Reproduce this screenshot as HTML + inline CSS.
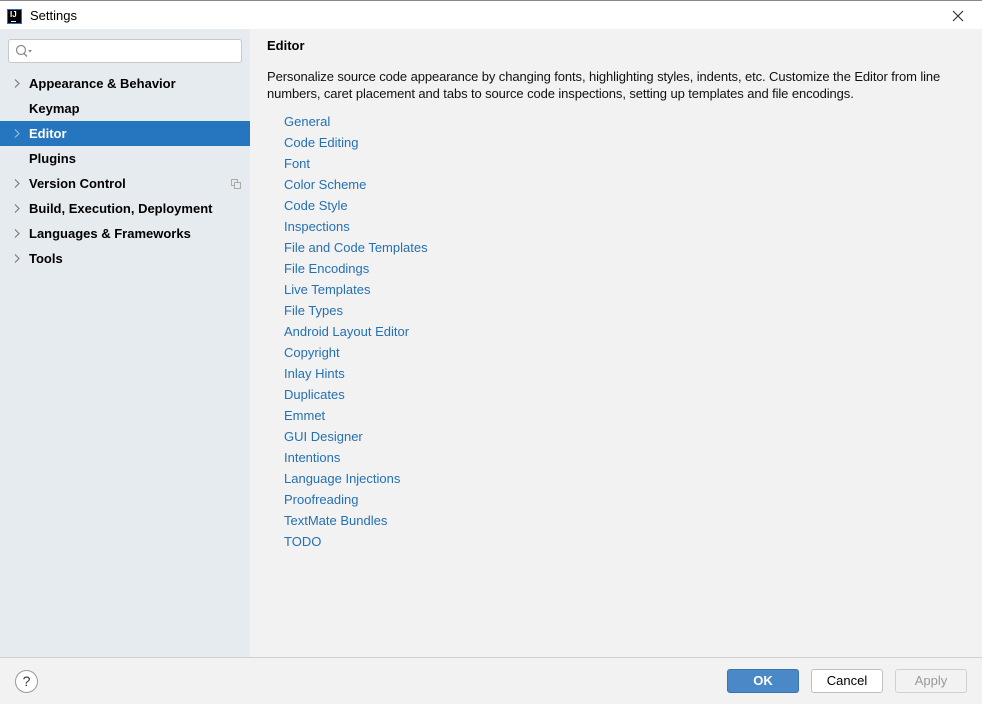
<!DOCTYPE html>
<html><head><meta charset="utf-8"><style>
*{margin:0;padding:0;box-sizing:border-box}
body{width:982px;height:704px;overflow:hidden;background:#f2f2f2;font-family:"Liberation Sans",Arial,sans-serif;font-size:13px;color:#000;position:relative}
.top{position:absolute;left:0;top:0;width:982px;height:1px;background:#8a8a8a}
.title{position:absolute;left:0;top:1px;width:982px;height:28px;background:#fff}
.title .t{position:absolute;left:30px;top:7px;font-size:13px}
.logo{position:absolute;left:7px;top:8px;width:15px;height:15px;background:#000;border:1px solid #2a6ad0;color:#fff;font-size:8px;font-weight:bold;line-height:9px;padding-left:2px}
.logo i{position:absolute;left:3px;top:11px;width:5px;height:1px;background:#fff}
.close{position:absolute;left:952px;top:9px}
.side{position:absolute;left:0;top:29px;width:250px;height:628px;background:#e6ebf0}
.search{position:absolute;left:8px;top:10px;width:234px;height:24px;background:#fff;border:1px solid #c4c9ce;border-radius:3px}
.item{position:absolute;left:0;width:250px;height:25px;line-height:25px;font-weight:bold;padding-left:29px;font-size:13px}
.item svg.ar{position:absolute;left:14px;top:8px}
.sel{background:#2675bf;color:#fff}
h1{position:absolute;left:267px;top:38px;font-size:13px;font-weight:bold}
.desc{position:absolute;left:267px;top:68px;width:700px;line-height:17px;font-size:13px;color:#111;letter-spacing:-0.1px}
.links{position:absolute;left:284px;top:113px}
.links div{height:21px;line-height:17px;color:#2470b3;font-size:13px}
.foot{position:absolute;left:0;top:657px;width:982px;height:1px;background:#d0d0d0}
.help{position:absolute;left:15px;top:670px;width:23px;height:23px;border:1px solid #999;border-radius:50%;background:#fff;text-align:center;line-height:21px;font-size:14px;color:#333}
.btn{position:absolute;top:669px;height:24px;width:72px;border:1px solid #bfbfbf;border-radius:3px;background:#fff;text-align:center;line-height:22px;font-size:13px}
</style></head><body>
<div class="top"></div>
<div class="title"><div class="logo">IJ<i></i></div><div class="t">Settings</div><svg class="close" width="12" height="12"><path d="M1 1L11 11M11 1L1 11" stroke="#333" stroke-width="1.2"/></svg></div>
<div class="side">
<div class="search"><svg width="24" height="22" style="position:absolute;left:3px;top:0"><circle cx="9" cy="10" r="4.5" fill="none" stroke="#888" stroke-width="1.2"/><line x1="12" y1="13.5" x2="15" y2="16.5" stroke="#888" stroke-width="1.3"/><path d="M16 10h4l-2 2.5z" fill="#888"/></svg></div>
<div class="item" style="top:42px"><svg class="ar" width="6" height="9"><path d="M1 0.5L5 4.5L1 8.5" fill="none" stroke="#777" stroke-width="1.1"/></svg>Appearance &amp; Behavior</div>
<div class="item" style="top:67px">Keymap</div>
<div class="item sel" style="top:92px"><svg class="ar" width="6" height="9"><path d="M1 0.5L5 4.5L1 8.5" fill="none" stroke="#9cc0e6" stroke-width="1.1"/></svg>Editor</div>
<div class="item" style="top:117px">Plugins</div>
<div class="item" style="top:142px"><svg class="ar" width="6" height="9"><path d="M1 0.5L5 4.5L1 8.5" fill="none" stroke="#777" stroke-width="1.1"/></svg>Version Control<svg width="10" height="10" style="position:absolute;left:231px;top:8px"><rect x="0.5" y="0.5" width="6" height="6" fill="none" stroke="#aaa"/><rect x="3.5" y="3.5" width="6" height="6" fill="#e6ebf0" stroke="#aaa"/></svg></div>
<div class="item" style="top:167px"><svg class="ar" width="6" height="9"><path d="M1 0.5L5 4.5L1 8.5" fill="none" stroke="#777" stroke-width="1.1"/></svg>Build, Execution, Deployment</div>
<div class="item" style="top:192px"><svg class="ar" width="6" height="9"><path d="M1 0.5L5 4.5L1 8.5" fill="none" stroke="#777" stroke-width="1.1"/></svg>Languages &amp; Frameworks</div>
<div class="item" style="top:217px"><svg class="ar" width="6" height="9"><path d="M1 0.5L5 4.5L1 8.5" fill="none" stroke="#777" stroke-width="1.1"/></svg>Tools</div>
</div>
<h1>Editor</h1>
<div class="desc">Personalize source code appearance by changing fonts, highlighting styles, indents, etc. Customize the Editor from line numbers, caret placement and tabs to source code inspections, setting up templates and file encodings.</div>
<div class="links">
<div>General</div><div>Code Editing</div><div>Font</div><div>Color Scheme</div><div>Code Style</div><div>Inspections</div><div>File and Code Templates</div><div>File Encodings</div><div>Live Templates</div><div>File Types</div><div>Android Layout Editor</div><div>Copyright</div><div>Inlay Hints</div><div>Duplicates</div><div>Emmet</div><div>GUI Designer</div><div>Intentions</div><div>Language Injections</div><div>Proofreading</div><div>TextMate Bundles</div><div>TODO</div>
</div>
<div class="foot"></div>
<div class="help">?</div>
<div class="btn" style="left:727px;background:#4a88c7;border-color:#3b73ad;color:#fff;font-weight:bold">OK</div>
<div class="btn" style="left:811px">Cancel</div>
<div class="btn" style="left:895px;background:#f2f2f2;border-color:#d0d0d0;color:#999">Apply</div>
</body></html>
